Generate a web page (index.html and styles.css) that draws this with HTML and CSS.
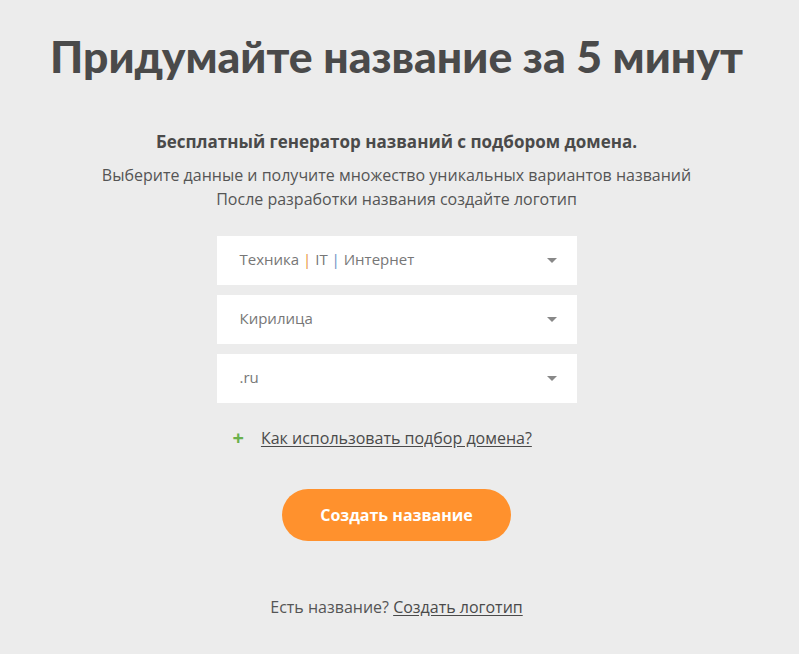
FILE: index.html
```html
<!DOCTYPE html>
<html lang="ru">
<head>
<meta charset="utf-8">
<title>Генератор названий</title>
<link rel="stylesheet" href="styles.css">
</head>
<body>
<main class="page">
  <h1 class="title">Придумайте название за 5 минут</h1>
  <p class="lead">Бесплатный генератор названий с подбором домена.</p>
  <p class="desc">Выберите данные и получите множество уникальных вариантов названий<br>После разработки названия создайте логотип</p>
  <div class="fields">
    <div class="select"><span class="value">Техника <span class="sep-o">|</span> IT <span class="sep-b">|</span> Интернет</span><span class="arrow"></span></div>
    <div class="select"><span class="value">Кирилица</span><span class="arrow"></span></div>
    <div class="select"><span class="value">.ru</span><span class="arrow"></span></div>
  </div>
  <div class="help"><span class="plus">+</span><a class="help-link" href="#">Как использовать подбор домена?</a></div>
  <button class="cta" type="button">Создать название</button>
  <p class="footer">Есть название? <a class="footer-link" href="#">Создать логотип</a></p>
</main>
</body>
</html>
```

FILE: styles.css
```css
html, body {
  margin: 0;
  padding: 0;
  background: #ececec;
}
body {
  font-family: "Open Sans", "Liberation Sans", sans-serif;
  color: #555;
}
.page {
  display: flex;
  flex-direction: column;
  align-items: center;
  text-align: center;
  padding-right: 6px;
}
.title {
  margin: 29px 0 0;
  font-family: "Lato", "Open Sans", sans-serif;
  font-weight: 900;
  font-size: 44.5px;
  line-height: 54px;
  color: #4a4a4a;
}
.lead {
  margin: 48px 0 0;
  font-weight: 700;
  font-size: 17px;
  line-height: 22px;
  color: #4a4a4a;
}
.desc {
  margin: 10px 0 0;
  font-size: 16px;
  line-height: 24px;
  color: #555;
}
.fields {
  margin-top: 25px;
  display: flex;
  flex-direction: column;
  gap: 10px;
  width: 360px;
}
.select {
  height: 49px;
  background: #fff;
  display: flex;
  align-items: center;
  justify-content: space-between;
  padding: 0 20px 0 23px;
  box-sizing: border-box;
  font-size: 15px;
  line-height: 20px;
  color: #777;
}
.value { margin-top: -3px; }
.sep-o { color: #e8913a; }
.sep-b { color: #6a8fc2; }
.arrow {
  width: 0;
  height: 0;
  border-left: 5px solid transparent;
  border-right: 5px solid transparent;
  border-top: 5px solid #888;
}
.help {
  margin-top: 25px;
  width: 360px;
  box-sizing: border-box;
  padding-left: 16px;
  display: flex;
  align-items: center;
  gap: 17px;
  font-size: 16px;
  line-height: 20px;
}
.plus {
  color: #6ab04c;
  font-weight: 700;
  font-size: 20px;
}
.help-link, .footer-link {
  color: #4a4a4a;
  text-decoration: underline;
  text-underline-offset: 2px;
}
.cta {
  margin-top: 41px;
  width: 229px;
  height: 52px;
  border: 0;
  border-radius: 26px;
  background: #ff912d;
  color: #fff;
  font-family: "Open Sans", sans-serif;
  font-weight: 700;
  font-size: 16px;
  cursor: pointer;
}
.footer {
  margin: 56px 0 0;
  font-size: 16px;
  line-height: 20px;
  color: #555;
}
```
